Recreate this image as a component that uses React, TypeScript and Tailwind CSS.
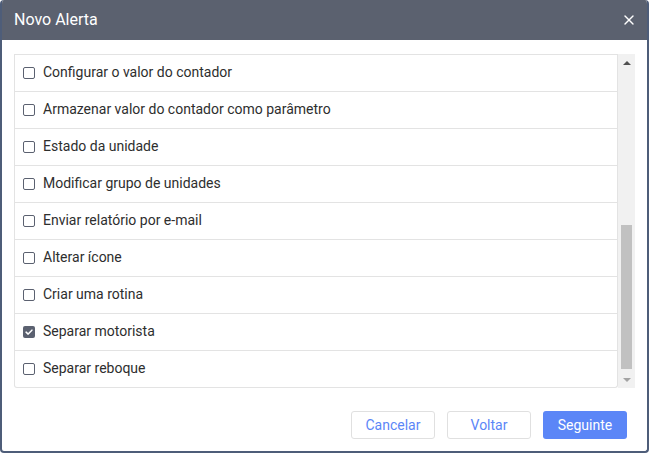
import { X } from "lucide-react";

const ITEMS = [
  { label: "Configurar o valor do contador", checked: false },
  { label: "Armazenar valor do contador como parâmetro", checked: false },
  { label: "Estado da unidade", checked: false },
  { label: "Modificar grupo de unidades", checked: false },
  { label: "Enviar relatório por e-mail", checked: false },
  { label: "Alterar ícone", checked: false },
  { label: "Criar uma rotina", checked: false },
  { label: "Separar motorista", checked: true },
  { label: "Separar reboque", checked: false },
];

function Checkbox({ checked }: { checked: boolean }) {
  if (checked) {
    return (
      <span className="flex h-[12px] w-[12px] shrink-0 items-center justify-center rounded-[2px] bg-[#5b6170]">
        <svg viewBox="0 0 12 12" className="h-[10px] w-[10px]">
          <path d="M2.5 6.2 L5 8.5 L9.5 3.8" fill="none" stroke="#fff" strokeWidth="1.8" strokeLinecap="round" strokeLinejoin="round" />
        </svg>
      </span>
    );
  }
  return <span className="h-[12px] w-[12px] shrink-0 rounded-[2px] border border-[#5b6170] bg-white" />;
}

export default function App() {
  return (
    <div className="h-[453px] w-[649px] font-['Roboto',sans-serif]">
      <div className="flex h-full flex-col overflow-hidden rounded-[4px] border-2 border-t-0 border-[#4e5d79] bg-white">
        <div className="flex h-[40px] shrink-0 items-center justify-between bg-[#5b616f] pl-[12px] pr-[10px]">
          <span className="text-[16px] text-white">Novo Alerta</span>
          <X className="h-[16px] w-[16px] text-white" strokeWidth={2} />
        </div>

        <div className="mt-[14px] ml-[12px] mr-[12px] flex h-[334px]">
          <div className="flex-1 overflow-hidden rounded-bl-[3px] rounded-br-[3px] border-l border-r border-b border-[#e3e3e3]">
            {ITEMS.map((item) => (
              <div
                key={item.label}
                className="flex h-[37px] items-center gap-[8px] border-t border-[#e3e3e3] pb-[1px] pl-[8px] text-[14px] text-[#2e2e2e]"
              >
                <Checkbox checked={item.checked} />
                <span>{item.label}</span>
              </div>
            ))}
          </div>
          <div className="relative flex w-[17px] flex-col bg-[#f1f1f1]">
            <div className="flex h-[17px] items-center justify-center">
              <span className="h-0 w-0 border-x-[4px] border-b-[4px] border-x-transparent border-b-[#505050]" />
            </div>
            <div className="flex-1 px-[3px] pb-[0px] pt-[154px]">
              <div className="h-[144px] bg-[#c1c1c1]" />
            </div>
            <div className="flex h-[17px] items-center justify-center">
              <span className="h-0 w-0 border-x-[4px] border-t-[4px] border-x-transparent border-t-[#a3a3a3]" />
            </div>
          </div>
        </div>

        <div className="mt-auto mb-[12px] flex justify-end gap-[12px] pr-[20px]">
          <button className="h-[28px] w-[84px] rounded-[3px] border border-[#e0e0e0] bg-white text-[14px] text-[#5b86f7]">
            Cancelar
          </button>
          <button className="h-[28px] w-[84px] rounded-[3px] border border-[#e0e0e0] bg-white text-[14px] text-[#5b86f7]">
            Voltar
          </button>
          <button className="h-[28px] w-[84px] rounded-[3px] bg-[#5b86f7] text-[14px] text-white">
            Seguinte
          </button>
        </div>
      </div>
    </div>
  );
}
